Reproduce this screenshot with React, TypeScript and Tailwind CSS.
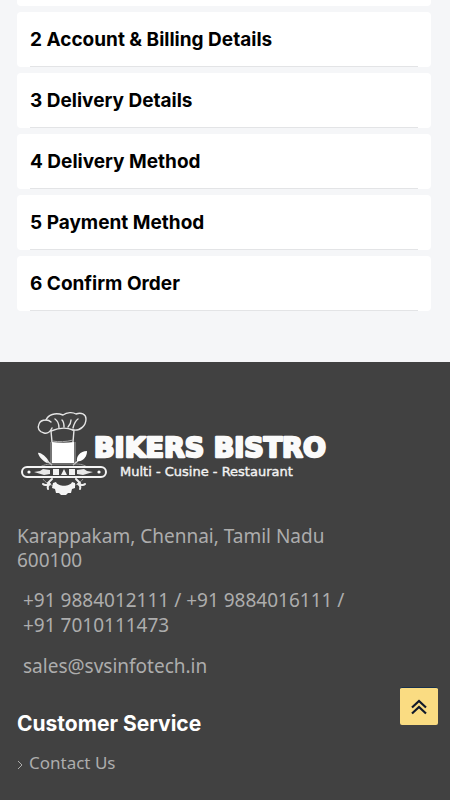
const steps = [
  "2 Account & Billing Details",
  "3 Delivery Details",
  "4 Delivery Method",
  "5 Payment Method",
  "6 Confirm Order",
];

function Logo() {
  return (
    <svg width="316" height="92" viewBox="0 0 316 92" role="img" aria-label="Bikers Bistro" fill="none">
      {/* chef hat */}
      <g stroke="#e4e4e4" strokeWidth="1.4" strokeLinecap="round" strokeLinejoin="round">
        <path d="M35 20c-2 4-5 6-8 5-5-1-7-5-5-9 1-3 4-4 7-4 2-5 9-8 17-5 4-3 10-3 13-1 5-2 10 0 10 5 0 6-5 12-13 11" />
        <path d="M29 12c2 0 4 1 5 2M34 23c7-3 15-4 22-1" />
        <path d="M38 11c3 2 4 5 4 9M45 12c2 2 2 5 2 7M54 12c0 3-1 5-3 7M61 11c-3 2-4 5-5 9" />
        <path d="M34 23l1 11M57 22l-1 12" />
      </g>
      <path d="M35 33c7 1 14 1 21-1M34 34v21M58 34v21" stroke="#a9a9a9" />
      <path d="M35 34c7 1 15 1 22 0v21H35z" fill="#fff" />
      {/* knife and spoon above the plank */}
      <path d="M21 45c2-1 9 4 11 9l-2 1c-4-2-8-6-9-10z" fill="#f5f5f5" />
      <path d="M30 53l5 4M61 53l-5 4" stroke="#ddd" strokeWidth="1.5" />
      <path d="M60 53c-1-4 3-10 10-10 0 6-4 11-10 10z" fill="#fff" />
      <path d="M23 59c5-3 10-3 13-3h20c5 0 10 0 14 3M26 71c2 3 6 6 12 7M66 71c-2 3-6 6-11 7" stroke="#9a9a9a" />
      {/* plank */}
      <rect x="5" y="59" width="84" height="10" rx="5" stroke="#f4f4f4" strokeWidth="2" fill="#414141" />
      <circle cx="12" cy="64" r="1.6" fill="#fff" />
      <circle cx="82" cy="64" r="1.6" fill="#fff" />
      <path d="M17 64l6-1 3-2 7 1v4l-6 1zM76 64l-6-1-3-2-7 1v4l6 1z" fill="#e8e8e8" />
      <path d="M36 61h6v6h-6zM47 61l3 6h-6zM52 61h6v6h-6z" fill="#f2f2f2" />
      {/* wrenches and gear */}
      <path
        d="M35 71l-4 4M26 76c2 2 5 1 6-1M31 81c-1-3 0-4 2-5M59 71l4 4M68 76c-2 2-5 1-6-1M63 81c1-3 0-4-2-5"
        stroke="#eee"
        strokeWidth="2"
        strokeLinecap="round"
      />
      <path
        d="M36 75l3-1c2 5 14 5 16 0l3 1v5l-3 1-1 4h-3l-2 2h-5l-2-2h-3l-1-4-3-1z"
        fill="#f5f5f5"
      />
      <text
        x="77"
        y="49"
        fontFamily="DejaVu Sans, sans-serif"
        fontSize="27"
        fontWeight="700"
        fill="#fafafa"
        stroke="#fafafa"
        strokeWidth="2.4"
        strokeLinejoin="round"
      >
        BIKERS BISTRO
      </text>
      <text x="103" y="68" fontFamily="DejaVu Sans, sans-serif" fontSize="13" fill="#f2f2f2" stroke="#f2f2f2" strokeWidth="0.4">
        Multi - Cusine - Restaurant
      </text>
    </svg>
  );
}

export default function App() {
  return (
    <div className="flex min-h-screen flex-col bg-[#f5f6f8] font-['Noto_Sans',sans-serif]">
      <main className="mb-[51px] flex flex-col gap-1.5 pr-[19px] pl-[17px]">
        <div className="h-1.5 rounded-b bg-white" />
        {steps.map((step) => (
          <section key={step} className="h-[55px] rounded bg-white px-[13px]">
            <h2 className="h-full border-b border-[#e3e4e6] font-['Inter',sans-serif] text-[19px] leading-[55px] font-bold text-black">
              {step}
            </h2>
          </section>
        ))}
      </main>

      <footer className="grow bg-[#414141] px-[17px] pt-[46px] text-[#adadad]">
        <Logo />
        <address className="pt-6 text-[19px] not-italic">
          <p className="max-w-[340px] leading-6">Karappakam, Chennai, Tamil Nadu 600100</p>
          <p className="mt-4 max-w-[340px] pl-1.5 leading-[25px]">
            +91 9884012111 / +91 9884016111 / +91 7010111473
          </p>
          <a href="mailto:sales@svsinfotech.in" className="mt-4 block pl-1.5 leading-[25px]">
            sales@svsinfotech.in
          </a>
        </address>

        <h3 className="mt-8 font-['Inter',sans-serif] text-[21px] leading-[26px] font-bold text-white">
          Customer Service
        </h3>
        <ul className="mt-3.5">
          <li>
            <a href="#contact" className="flex items-center gap-1.5 text-[17px] leading-6">
              <svg width="6" height="10" viewBox="0 0 6 10" fill="none" stroke="currentColor" className="mt-1">
                <path d="M1 1l4 4-4 4" />
              </svg>
              Contact Us
            </a>
          </li>
        </ul>
      </footer>

      <button
        type="button"
        aria-label="Back to top"
        className="fixed right-3 bottom-[75px] flex size-[38px] items-center justify-center rounded-xs border-t border-[#17304d] bg-[#fadc82] text-[#10192b]"
      >
        <svg width="16" height="16" viewBox="0 0 16 16" fill="none" stroke="currentColor" strokeWidth="2.2">
          <path d="M1 8.5l7-6.5 7 6.5M1 14.5L8 8l7 6.5" />
        </svg>
      </button>
    </div>
  );
}
